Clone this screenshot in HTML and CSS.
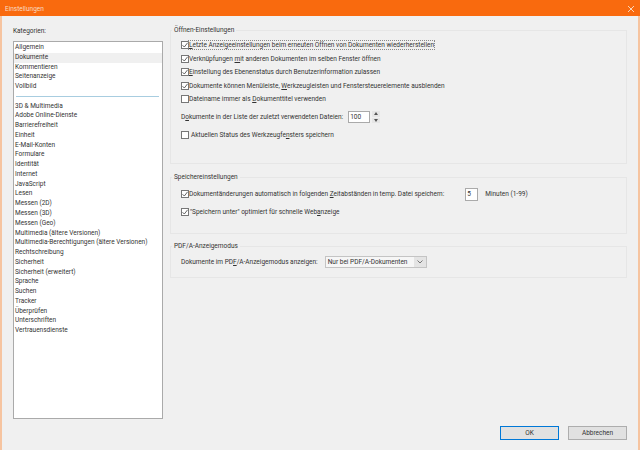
FILE: index.html
```html
<!DOCTYPE html>
<html lang="de">
<head>
<meta charset="utf-8">
<title>Einstellungen</title>
<link rel="stylesheet" href="styles.css">
</head>
<body>
<svg class="defs" width="0" height="0" aria-hidden="true">
  <symbol id="box" viewBox="0 0 8 8"><rect x=".5" y=".5" width="7" height="7" fill="#fff" stroke="#777"/></symbol>
  <symbol id="tick" viewBox="0 0 8 8"><rect x=".5" y=".5" width="7" height="7" fill="#fff" stroke="#777"/><path d="M1.5 4.2L3.300 6L6.600 1.800" fill="none" stroke="#555" stroke-width=".9"/></symbol>
</svg>
<div class="window">
  <header class="titlebar">
    <span class="title">Einstellungen</span>
    <svg class="close" width="6" height="6" viewBox="0 0 6 6"><path d="M0 0L6 6M6 0L0 6" stroke="#f9d5b8" stroke-width="1" fill="none"/></svg>
  </header>
  <div class="content">
    <aside class="sidebar">
      <div class="cat-label">Kategorien:</div>
      <ul class="list">
        <li>Allgemein</li>
        <li class="selected">Dokumente</li>
        <li>Kommentieren</li>
        <li>Seitenanzeige</li>
        <li>Vollbild</li>
        <li class="sep"></li>
        <li>3D &amp; Multimedia</li>
        <li>Adobe Online-Dienste</li>
        <li>Barrierefreiheit</li>
        <li>Einheit</li>
        <li>E-Mail-Konten</li>
        <li>Formulare</li>
        <li>Identität</li>
        <li>Internet</li>
        <li>JavaScript</li>
        <li>Lesen</li>
        <li>Messen (2D)</li>
        <li>Messen (3D)</li>
        <li>Messen (Geo)</li>
        <li>Multimedia (ältere Versionen)</li>
        <li>Multimedia-Berechtigungen (ältere Versionen)</li>
        <li>Rechtschreibung</li>
        <li>Sicherheit</li>
        <li>Sicherheit (erweitert)</li>
        <li>Sprache</li>
        <li>Suchen</li>
        <li>Tracker</li>
        <li>Überprüfen</li>
        <li>Unterschriften</li>
        <li>Vertrauensdienste</li>
      </ul>
    </aside>
    <main class="main">
      <fieldset class="group group-open">
        <legend class="legend">Öffnen-Einstellungen</legend>
        <div class="rows">
          <label class="row"><svg class="cb"><use href="#tick"/></svg><span class="focus"><u>L</u>etzte Anzeigeeinstellungen beim erneuten Öffnen von Dokumenten wiederherstellen</span></label>
          <label class="row"><svg class="cb"><use href="#tick"/></svg><span>Verknüpfungen <u>m</u>it anderen Dokumenten im selben Fenster öffnen</span></label>
          <label class="row"><svg class="cb"><use href="#tick"/></svg><span><u>E</u>instellung des Ebenenstatus durch Benutzerinformation zulassen</span></label>
          <label class="row"><svg class="cb"><use href="#tick"/></svg><span>Dokumente können Menüleiste, <u>W</u>erkzeugleisten und Fenstersteuerelemente ausblenden</span></label>
          <label class="row"><svg class="cb"><use href="#box"/></svg><span>Dateiname immer als <u>D</u>okumenttitel verwenden</span></label>
        </div>
        <div class="recent">
          <span>D<u>o</u>kumente in der Liste der zuletzt verwendeten Dateien:</span>
          <span class="spin">100</span>
          <span class="spin-btns">
            <span class="step"><svg width="4" height="3" viewBox="0 0 4 3"><path d="M2 0L4 3H0Z" fill="#555"/></svg></span>
            <span class="step"><svg width="4" height="3" viewBox="0 0 4 3"><path d="M0 0H4L2 3Z" fill="#555"/></svg></span>
          </span>
        </div>
        <label class="row row-tool"><svg class="cb"><use href="#box"/></svg><span>Aktuellen Status des Werkzeugfe<u>n</u>sters speichern</span></label>
      </fieldset>
      <fieldset class="group group-save">
        <legend class="legend">Speichereinstellungen</legend>
        <div class="row row-auto">
          <svg class="cb"><use href="#tick"/></svg><span>Dokumentänderungen automatisch in folgenden <u>Z</u>eitabständen in temp. Datei speichern:</span>
          <span class="minutes">5</span><span>Minuten (1-99)</span>
        </div>
        <label class="row row-web"><svg class="cb"><use href="#tick"/></svg><span>"Speichern unter" optimiert für schnelle Web<u>a</u>nzeige</span></label>
      </fieldset>
      <fieldset class="group group-pdfa">
        <legend class="legend">PDF/A-Anzeigemodus</legend>
        <div class="pdfa-row">
          <span>Dokumente im PD<u>F</u>/A-Anzeigemodus anzeigen:</span>
          <span class="select"><span class="select-val">Nur bei PDF/A-Dokumenten</span>
            <span class="select-btn"><svg width="6" height="4" viewBox="0 0 6 4"><path d="M.5 .5L3 3L5.500 .5" stroke="#777" fill="none"/></svg></span>
          </span>
        </div>
      </fieldset>
    </main>
  </div>
  <footer class="footer">
    <button class="btn btn-default">OK</button>
    <button class="btn">Abbrechen</button>
  </footer>
</div>
</body>
</html>
```
FILE: styles.css
```css
* { box-sizing: border-box; }
html, body { margin: 0; padding: 0; }
body { width: 640px; height: 450px; overflow: hidden; font-family: "Roboto", "Open Sans", sans-serif; font-size: 6.5px; color: #333; }
.defs { display: block; height: 0; }
.window { width: 640px; height: 450px; display: flex; flex-direction: column; background: #f0f0f0; border: solid #f6c4a0; border-width: 0 2px; }
.titlebar { height: 16px; margin: 0 -2px; background: #f96a0e; color: #f9dcc6; display: flex; align-items: center; justify-content: space-between; padding: 2px 6px 0 5px; flex: none; }
.content { display: flex; flex: 1; min-height: 0; padding: 8px 11px 0; }
.sidebar { width: 150px; flex: none; display: flex; flex-direction: column; margin-right: 7px; }
.cat-label { height: 17px; padding-top: 3px; line-height: 9px; }
.list { list-style: none; margin: 0; padding: 1px 0 0; height: 379px; background: #fff; border: 1px solid #aaa; }
.list li { height: 9.78px; line-height: 9.78px; padding-left: 1px; white-space: nowrap; }
.list li.selected { background: #f0f0f0; }
.list li.sep { position: relative; }
.list li.sep::after { content: ""; position: absolute; left: 2px; right: 3px; top: 4px; height: 1px; background: #a8cde0; }
.main { flex: 1; min-width: 0; display: flex; flex-direction: column; }
.group { margin: 0; padding: 0; min-width: 0; border: 1px solid #e6e6e6; }
.legend { font-size: 6.5px; line-height: 9px; padding: 0 2px; margin-left: 1px; }
.group-open { height: 138px; margin-top: 2px; }
.group-save { height: 61px; margin-top: 9px; }
.group-pdfa { height: 36px; margin-top: 8px; }
.rows { display: flex; flex-direction: column; gap: 3.5px; padding-top: 5px; }
.row { display: flex; align-items: center; height: 10px; padding-left: 10px; white-space: nowrap; }
.cb { width: 8px; height: 8px; flex: none; }
.focus { outline: 1px dotted #888; }
.recent { display: flex; align-items: center; height: 12px; margin-top: 7px; padding-left: 10px; white-space: nowrap; }
.spin { width: 22px; height: 12px; background: #fff; border: 1px solid #aaa; margin-left: 5px; padding-left: 1px; line-height: 10px; }
.spin-btns { display: flex; flex-direction: column; width: 8px; height: 12px; margin-left: 2px; gap: 1px; }
.step { flex: 1; background: #e6e6e6; display: flex; align-items: center; justify-content: center; }
.row-tool { margin-top: 7px; }
.row-tool .cb { margin-right: 2px; }
.row-auto { margin-top: 7px; }
.row-web { margin-top: 8px; }
.row-web .cb { margin-right: 1px; }
.minutes { width: 13px; height: 13px; background: #fff; border: 1px solid #aaa; margin: 0 7px 0 21px; padding-left: 1px; line-height: 11px; flex: none; }
.pdfa-row { display: flex; align-items: center; margin-top: 5px; padding-left: 10px; white-space: nowrap; }
.select { width: 102px; height: 12px; margin-left: 7px; background: #f6f6f6; border: 1px solid #c4c4c4; display: flex; align-items: stretch; justify-content: space-between; }
.select-val { padding-left: 2px; line-height: 10px; }
.select-btn { width: 12px; background: #e4e4e4; display: flex; align-items: center; justify-content: center; }
.footer { flex: none; height: 31px; display: flex; justify-content: flex-end; align-items: flex-start; gap: 9px; padding: 7px 11px 0 0; }
.btn { width: 59px; height: 14px; padding: 0; font: inherit; color: #333; background: #e1e1e1; border: 1px solid #adadad; }
.btn-default { border-color: #0078d7; }
```
